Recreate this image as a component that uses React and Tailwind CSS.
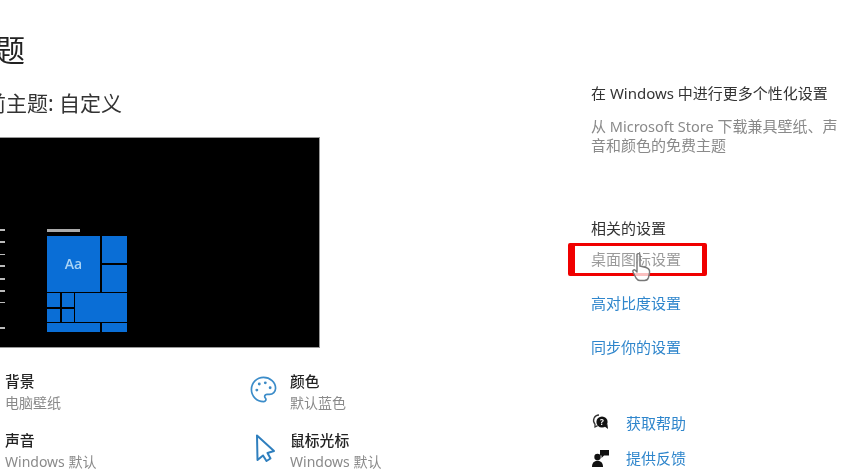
import React from "react";
import { Palette } from "lucide-react";

const font = { fontFamily: '"Noto Sans","Noto Sans CJK SC",sans-serif' };

function Item({ icon, title, sub }) {
  return (
    <div className="flex items-start h-[59px]">
      <div className="w-[40px] h-[40px] shrink-0 flex justify-start items-center">{icon}</div>
      <div className="flex flex-col">
        <div className="text-[14.8px] leading-[20px] text-[#222] font-medium">{title}</div>
        <div className="text-[14px] leading-[20px] mt-[2px] text-[#8a8a8a]">{sub}</div>
      </div>
    </div>
  );
}

function HelpIcon() {
  return (
    <svg width="20" height="20" viewBox="0 0 20 20" className="shrink-0">
      <path d="M8 2a5.500 5.500 0 0 0-4 9.200V14l2.600-1.400" fill="none" stroke="#333" strokeWidth="1.300" />
      <circle cx="11" cy="9" r="5.600" fill="#111" />
      <path d="M13 13l4 3-.6-5z" fill="#111" />
      <text x="11" y="12" fontSize="8" fill="#fff" textAnchor="middle" fontWeight="700">?</text>
    </svg>
  );
}

function FeedbackIcon() {
  return (
    <svg width="20" height="20" viewBox="0 0 20 20" className="shrink-0">
      <path d="M9 2h9v5.500h-5L10.500 10V7.500H9z" fill="#111" />
      <circle cx="6.500" cy="9" r="3.200" fill="#111" />
      <path d="M1 19c0-4 2.200-6.200 5.500-6.200S12 15 12 19z" fill="#111" />
    </svg>
  );
}

function CursorArrow() {
  return (
    <svg width="30" height="32" viewBox="0 0 30 32" className="shrink-0 mt-[-5px] ml-[-1px]">
      <path d="M8 3.500 L8.500 28 L14 23.500 L17.500 29 L21.500 26.500 L18.500 21 L25 19 Z" fill="#fff" stroke="#2f7fbe" strokeWidth="2" strokeLinejoin="round" />
    </svg>
  );
}

export default function App() {
  return (
    <div className="relative w-[859px] h-[473px] overflow-hidden bg-white flex blur-[0.6px]" style={font}>
      <section className="w-[626px] shrink-0 ml-[-35px] pt-[30px]">
        <h1 className="text-[30px] leading-[40px] font-normal text-[#222]">主题</h1>
        <h2 className="mt-[18px] ml-[-1px] text-[21px] leading-[30px] font-normal text-[#333]">当前主题: 自定义</h2>

        <div className="mt-[19px] w-[355px] h-[211px] bg-black border-t border-r border-b border-[#999] flex pt-[91px] box-border">
          <div className="w-[40px] h-[100px] ml-[35px] shrink-0 flex flex-col items-start">
            <div className="w-[5px] h-[2px] bg-[#bbb] mt-0" />
            <div className="w-[5px] h-[2px] bg-[#bbb] mt-[10px]" />
            <div className="w-[5px] h-[2px] bg-[#bbb] mt-[11px]" />
            <div className="w-[5px] h-[2px] bg-[#bbb] mt-[10px]" />
            <div className="w-[5px] h-[2px] bg-[#bbb] mt-[11px]" />
            <div className="w-[5px] h-[2px] bg-[#bbb] mt-[10px]" />
            <div className="w-[5px] h-[2px] bg-[#bbb] mt-[10px]" />
            <div className="w-[5px] h-[2px] bg-[#bbb] mt-[24px]" />
          </div>
          <div className="w-[80px] ml-[7px] shrink-0">
            <div className="w-[33px] h-[3px] bg-[#aaa]" />
            <div className="mt-[4px] w-[80px] h-[97px] grid grid-cols-[13px_12px_25px_25px] grid-rows-[27px_27px_14px_13px_9px] gap-[1.5px] content-start">
              <div className="col-span-3 row-span-2 bg-[#0a6ed6] flex items-center justify-center text-[14px] font-semibold text-[#a9d3f5]" style={{ fontFamily: '"Open Sans",sans-serif' }}>Aa</div>
              <div className="bg-[#0a6ed6]" />
              <div className="bg-[#0a6ed6]" />
              <div className="bg-[#0a6ed6]" />
              <div className="bg-[#0a6ed6]" />
              <div className="col-span-2 row-span-2 bg-[#0a6ed6]" />
              <div className="bg-[#0a6ed6]" />
              <div className="bg-[#0a6ed6]" />
              <div className="col-span-3 bg-[#0a6ed6]" />
              <div className="bg-[#0a6ed6]" />
            </div>
          </div>
        </div>

        <div className="mt-[23px] grid grid-cols-[285px_1fr]">
          <div>
            <Item icon={null} title="背景" sub="电脑壁纸" />
            <Item icon={null} title="声音" sub="Windows 默认" />
          </div>
          <div>
            <Item icon={<Palette size={29} strokeWidth={1.4} color="#3b8cc9" className="mt-[-3px] ml-[-1px]" />} title="颜色" sub="默认蓝色" />
            <Item icon={<CursorArrow />} title="鼠标光标" sub="Windows 默认" />
          </div>
        </div>
      </section>

      <aside className="w-[258px] shrink-0 pt-[82px]">
        <div className="text-[15px] leading-[22px] text-[#333]">在 Windows 中进行更多个性化设置</div>
        <div className="mt-[13px] w-[252px] text-[15px] leading-[19px] text-[#8a8a8a]">从<span className="text-[14.5px]"> Microsoft Store </span>下载兼具壁纸、声音和颜色的免费主题</div>

        <div className="mt-[62px] text-[15px] leading-[22px] text-[#333]">相关的设置</div>
        <div className="mt-[9px] text-[15px] leading-[22px] text-[#9a9a9a]">桌面图标设置</div>
        <div className="mt-[22px] text-[15px] leading-[22px] text-[#2f86cc]">高对比度设置</div>
        <div className="mt-[22px] text-[15px] leading-[22px] text-[#2f86cc]">同步你的设置</div>

        <div className="mt-[54px] flex items-center gap-[15px] h-[22px]">
          <HelpIcon />
          <span className="text-[15px] text-[#2f86cc]">获取帮助</span>
        </div>
        <div className="mt-[13px] flex items-center gap-[15px] h-[22px]">
          <FeedbackIcon />
          <span className="text-[15px] text-[#2f86cc]">提供反馈</span>
        </div>
      </aside>

      <div className="absolute left-[568px] top-[243px] w-[139px] h-[33px] rounded-[2px] border-y-[3px] border-l-[7px] border-r-[5px] border-[#f00000]" />
      <svg className="absolute left-[631px] top-[251px]" width="22" height="34" viewBox="0 0 22 34">
        <path d="M6 3.500c1-1.500 3-1 3 .8V15l6 1.500c3 .8 4 2.500 3.500 5.500l-1 4.500c-.5 2-2 3-4 3H9c-2 0-3-1-4-2.500L2 21c-.8-1.500 1-3 2.500-1.500L6 21z" fill="#fff" fillOpacity="0.75" stroke="#777" strokeWidth="1.400" strokeLinejoin="round" />
      </svg>
    </div>
  );
}
